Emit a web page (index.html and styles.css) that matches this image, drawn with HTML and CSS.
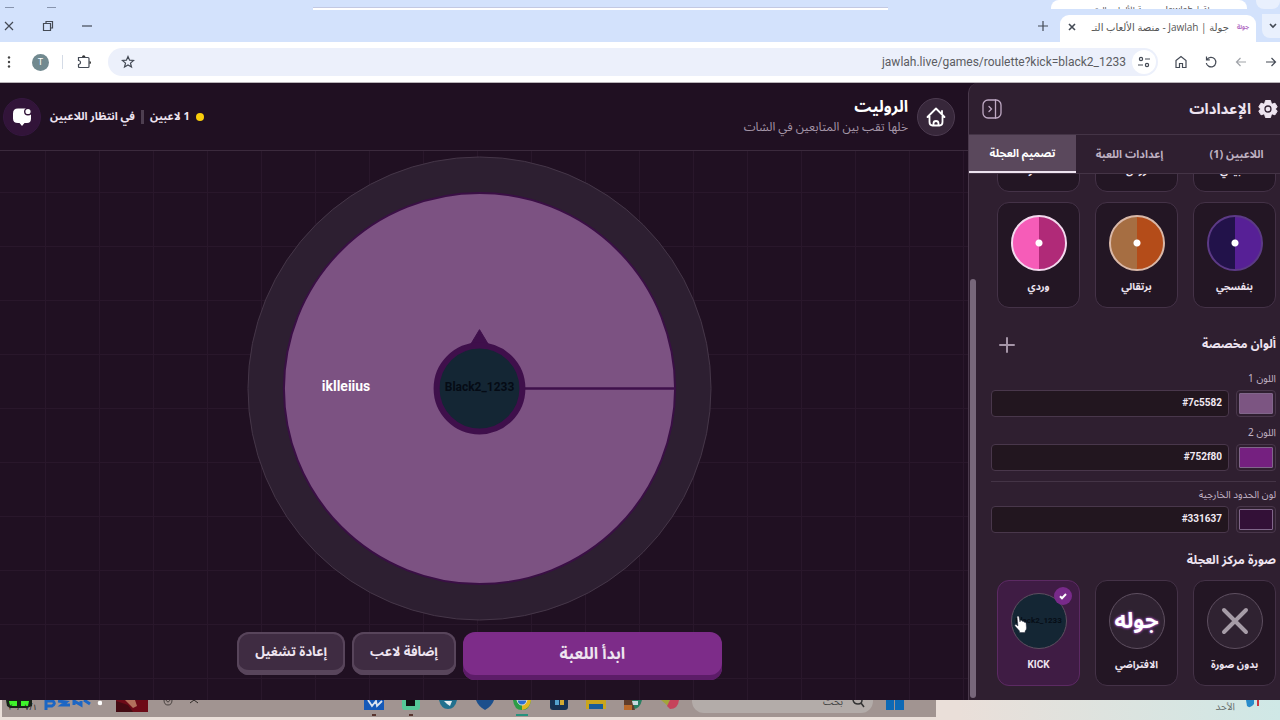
FILE: index.html
```html
<!DOCTYPE html>
<html lang="ar" dir="rtl">

<head>
    <meta charset="utf-8"/>
    <title>جولة | Jawlah - منصة الألعاب</title>
    <link rel="stylesheet" href="styles.css">
</head>

<body>
<div class="back-window">
    <span class="back-edge"></span>
    <span class="back-tab">جولة | Jawlah - منصة الألعاب الت</span>
    <span class="back-bar"></span>
    <span class="back-controls"><i></i><i></i></span>
</div>

<div class="tabstrip">
    <button class="tab-list" aria-label="بحث في علامات التبويب">
        <svg width="10" height="10" viewBox="0 0 10 10"><path d="M2 3l3 3 3-3" class="line bold"/></svg>
    </button>
    <div class="tab">
        <span class="favicon">جولة</span>
        <span class="tab-title">جولة | Jawlah - منصة الألعاب التـ</span>
        <button aria-label="إغلاق علامة التبويب">
            <svg width="10" height="10" viewBox="0 0 10 10"><path d="M2 2l6 6M8 2l-6 6" class="line bold"/></svg>
        </button>
    </div>
    <button class="new-tab" aria-label="علامة تبويب جديدة">
        <svg width="12" height="12" viewBox="0 0 12 12"><path d="M6 1v10M1 6h10" class="line"/></svg>
    </button>
    <div class="window-controls">
        <button aria-label="تصغير"><svg width="12" height="12" viewBox="0 0 12 12"><path d="M1 6h10" class="line"/></svg></button>
        <button aria-label="استعادة"><svg width="12" height="12" viewBox="0 0 12 12"><path d="M1.500 3.500h7v7h-7zM4 3V1.500h6.500V8H9" class="line"/></svg></button>
        <button aria-label="إغلاق"><svg width="12" height="12" viewBox="0 0 12 12"><path d="M2 2l8 8M10 2l-8 8" class="line"/></svg></button>
    </div>
</div>

<div class="browser-bar">
    <button aria-label="للأمام"><svg width="14" height="14" viewBox="0 0 14 14"><path d="M2 7h9M7.500 3L11.500 7l-4 4" class="line"/></svg></button>
    <button class="faded" aria-label="رجوع"><svg width="14" height="14" viewBox="0 0 14 14"><path d="M12 7H3M6.500 3L2.500 7l4 4" class="line"/></svg></button>
    <button aria-label="تحديث"><svg width="14" height="14" viewBox="0 0 14 14"><path d="M3 4.500A4.800 4.800 0 1 1 2.300 8M2.500 1.500v3.300h3.300" class="line"/></svg></button>
    <button aria-label="الصفحة الرئيسية"><svg width="14" height="14" viewBox="0 0 14 14"><path d="M2 5.500L7 1.500l5 4v7H8.500v-4h-3v4H2z" class="line"/></svg></button>
    <div class="omnibox">
        <span class="site-info"><svg width="14" height="14" viewBox="0 0 14 14"><circle cx="4" cy="4" r="1.600" class="line"/><circle cx="10" cy="10" r="1.600" class="line"/><path d="M8 4h5M1 10h5" class="line"/></svg></span>
        <input type="text" class="url" aria-label="العنوان" value="jawlah.live/games/roulette?kick=black2_1233">
        <button aria-label="إضافة إشارة"><svg width="14" height="14" viewBox="0 0 14 14"><path d="M7 1.500l1.600 3.700 4 .3-3.100 2.600 1 3.900L7 9.900 3.500 12l1-3.900L1.400 5.500l4-.3z" class="line"/></svg></button>
    </div>
    <button class="extensions" aria-label="الإضافات"><svg width="16" height="16" viewBox="0 0 16 16"><path d="M2.500 3.500h9.500q1 0 1 1v8q0 1-1 1H3.500q-1 0-1-1V10.500a2 2 0 0 0 0-4z" class="line"/><path d="M6 3a1.700 1.700 0 0 1 3.400 0zM13.500 7a1.500 1.500 0 0 1 0 3z" fill="#333"/></svg></button>
    <span class="bar-sep"></span>
    <span class="profile">T</span>
    <button aria-label="القائمة"><svg width="14" height="14" viewBox="0 0 14 14"><g fill="#444"><circle cx="7" cy="2.500" r="1.200"/><circle cx="7" cy="7" r="1.200"/><circle cx="7" cy="11.500" r="1.200"/></g></svg></button>
</div>

<div class="app">
    <aside class="sidebar">
        <header class="side-head">
            <svg width="20" height="20" viewBox="0 0 20 20"><path fill="#eee4f0" stroke="#eee4f0" stroke-linejoin="round" d="M7.500 1.500h5l.7 2.700 1.300.8 2.500-.8 2.200 3.700-1.900 2.100 1.900 2.100-2.200 3.700-2.500-.8-1.300.8-.7 2.700h-5l-.7-2.700-1.300-.8-2.500.8L.8 12.100l1.900-2.100L.8 7.900 3 4.200l2.500.8 1.300-.8z"/><circle cx="10" cy="10" r="3" fill="#eee4f0" stroke="#2f1f30" stroke-width="1.300"/></svg>
            <h2>الإعدادات</h2>
            <button class="collapse" aria-label="طي اللوحة">
                <svg width="20" height="20" viewBox="0 0 20 20" fill="none" stroke="#bfa9c4" stroke-width="1.300" stroke-linecap="round"><rect x="1" y="1" width="18" height="18" rx="5"/><path d="M13.500 1v18M7 7.500L9.500 10 7 12.500"/></svg>
            </button>
        </header>
        <nav class="side-tabs">
            <button>اللاعبين (1)</button>
            <button>إعدادات اللعبة</button>
            <button class="active">تصميم العجلة</button>
        </nav>
        <div class="side-body">
            <div class="side-content">
                <div class="cards">
                    <button class="card"><span class="disc green"></span>طبيعي</button>
                    <button class="card"><span class="disc blue"></span>زرقن</button>
                    <button class="card"><span class="disc red"></span>أحمر</button>
                    <button class="card"><span class="disc violet"></span>بنفسجي</button>
                    <button class="card"><span class="disc orange"></span>برتقالي</button>
                    <button class="card"><span class="disc pink"></span>وردي</button>
                </div>
                <div class="custom-head">
                    <h3>ألوان مخصصة</h3>
                    <button aria-label="إضافة لون">
                        <svg width="18" height="18" viewBox="0 0 18 18"><path d="M9 2v14M2 9h14" stroke="#a595a7" stroke-width="2" stroke-linecap="round"/></svg>
                    </button>
                </div>
                <div class="color-field">
                    <label for="color1">اللون 1</label>
                    <div class="color-row">
                        <input type="color" id="color1" value="#7c5582">
                        <input type="text" aria-label="قيمة اللون 1" value="#7c5582">
                    </div>
                </div>
                <div class="color-field">
                    <label for="color2">اللون 2</label>
                    <div class="color-row">
                        <input type="color" id="color2" value="#752080">
                        <input type="text" aria-label="قيمة اللون 2" value="#752f80">
                    </div>
                </div>
                <div class="color-field border-field">
                    <label for="color3">لون الحدود الخارجية</label>
                    <div class="color-row">
                        <input type="color" id="color3" value="#331037">
                        <input type="text" aria-label="قيمة لون الحدود" value="#331637">
                    </div>
                </div>
                <h3 class="center-title">صورة مركز العجلة</h3>
                <div class="cards">
                    <button class="card">
                        <span class="thumb"><svg width="30" height="30" viewBox="0 0 30 30"><path d="M4 4l22 22M26 4L4 26" stroke="#a69ca7" stroke-width="4" stroke-linecap="round"/></svg></span>
                        بدون صورة
                    </button>
                    <button class="card">
                        <span class="thumb logo">جوله</span>
                        الافتراضي
                    </button>
                    <button class="card selected">
                        <span class="thumb kick">Black2_1233</span>
                        KICK
                        <span class="check"><svg width="10" height="10" viewBox="0 0 10 10"><path d="M2 5.200l2 2 4-4.200" fill="none" stroke="#fff" stroke-width="2"/></svg></span>
                        <svg class="hand" width="14" height="18" viewBox="0 0 14 18"><path fill="#fff" stroke="#223" stroke-width=".4" d="M3 1.500q1.500-1 2 .5l1 5 .3-1.500q1.500-.6 1.800.8 1.700-.6 2 .9 1.900-.3 2 1.300l.4 4.500q0 1.800-1.400 3V17.500H5.500V16L1 11q-.8-1.700 1-1.600L4 11z"/></svg>
                    </button>
                </div>
            </div>
            <div class="scrollbar"><span></span></div>
        </div>
    </aside>

    <main class="main">
        <header class="game-head">
            <a href="#" class="round" aria-label="الرئيسية">
                <svg width="20" height="20" viewBox="0 0 20 20" fill="none" stroke="#fff" stroke-width="1.800" stroke-linecap="round" stroke-linejoin="round"><path d="M1.500 10L10 1.500 18.500 10M16 4v3M3.500 9v6q0 3.500 3 3.500h7q3 0 3-3.500V9M7.500 18v-1.500a2.500 2.500 0 0 1 5 0V18"/></svg>
            </a>
            <div class="game-name">
                <h1>الروليت</h1>
                <p>خلها تقب بين المتابعين في الشات</p>
            </div>
            <div class="status">
                <span class="dot"></span>
                <span>1 لاعبين</span>
                <span class="pipe"></span>
                <span>في انتظار اللاعبين</span>
            </div>
            <button class="round chat" aria-label="المحادثة">
                <svg width="20" height="20" viewBox="0 0 20 20"><path fill="#fff" d="M6 1.500h9q4 0 4 4v6q0 4.500-4 4.500h-2.500L10 19l-2.500-3H6q-5 0-5-4.500v-5q0-5 5-5z"/><circle cx="16" cy="4.500" r="3.300" fill="#fff" stroke="#321439" stroke-width="1.400"/></svg>
            </button>
        </header>
        <section class="stage">
            <svg class="wheel" viewBox="0 0 466 466">
                <circle cx="233" cy="233" r="232" fill="#2d1f31" stroke="#453648"/>
                <circle cx="233" cy="233" r="196" fill="#7c5282" stroke="#3a0f45" stroke-width="2"/>
                <path d="M278 233h151" stroke="#3f104b" stroke-width="2.500"/>
                <path d="M233 174l12 20h-24z" fill="#3f0f4b" stroke="#3f0f4b"/>
                <circle cx="233" cy="233" r="43" fill="#142634" stroke="#3f0f4b" stroke-width="6"/>
                <text x="75" y="236" class="player">iklleiius</text>
                <text x="233" y="236" class="center-name">Black2_1233</text>
            </svg>
            <div class="actions">
                <button class="start">ابدأ اللعبة</button>
                <button class="plain">إضافة لاعب</button>
                <button class="plain">إعادة تشغيل</button>
            </div>
        </section>
    </main>
</div>

<footer class="taskbar">
    <div class="tray">
        <svg width="102" height="16" viewBox="0 0 102 16">
            <path d="M6 0h26v6l-5 2H10L7 6z" fill="#172117"/><path d="M9 1h8v5h-7zM21 1h8l-1 5h-7z" fill="#3ef52a"/>
            <text x="37" y="10" class="date">٢٠/٠٧/١</text>
            <path d="M46 10V1h7q3 3-1 5h-5M58 1l8 1-4 3h8M74 5V1l7 4V1M84 0l6 4" fill="none" stroke="#1c66c4" stroke-width="3"/>
            <circle cx="100" cy="3" r="2.300" fill="#fff"/>
        </svg>
        <svg width="32" height="16" viewBox="0 0 32 16"><path d="M0 0h32v12H0z" fill="#6d0a17"/><path d="M9 0h10l2 6-4 2z" fill="#b3705b"/><path d="M0 1l12 4 5 7H0z" fill="#430a12"/></svg>
        <svg width="12" height="8" viewBox="0 0 12 8"><path d="M2 0q0 5 4 5t4-5M4 0q2 4 4 0" fill="none" stroke="#494240"/></svg>
        <svg width="12" height="8" viewBox="0 0 12 8"><path d="M2 3l4-3 4 3" fill="none" stroke="#2e2927"/></svg>
    </div>
    <div class="pinned">
        <svg width="20" height="16" viewBox="0 0 20 16"><path d="M0 0h20v10H0z" fill="#1459b8"/><path d="M4 0l4 6 4-5 1 5 5-5" fill="none" stroke="#d9e2ee" stroke-width="1.800"/><path d="M8 14h4v2H8z" fill="#59352e"/></svg>
        <svg width="20" height="16" viewBox="0 0 20 16"><path d="M1 0h18v7q0 3-3 3H4q-3 0-3-3z" fill="#55c896"/><path d="M5 0h9v6H5z" fill="#111"/><path d="M8 14h4v2H8z" fill="#59352e"/></svg>
        <svg width="20" height="16" viewBox="0 0 20 16"><path d="M1 0h18q-2 9-9 9T1 0z" fill="#21708e"/><path d="M6 1h8l-2 5-3-2z" fill="#e6edf0"/></svg>
        <svg width="20" height="16" viewBox="0 0 20 16"><path d="M1 0h18q-2 6-9 10Q3 6 1 0z" fill="#1c4f8c"/></svg>
        <svg width="20" height="16" viewBox="0 0 20 16"><path d="M1 0h18q-1 10-9 10T1 0z" fill="#2c9c46"/><path d="M10 0h9q-1 9-9 10z" fill="#e2b71e"/><path d="M5 0h10q-1 5-5 5T5 0z" fill="#2c6ed1" stroke="#ddd"/><path d="M4 14h12v2H4z" fill="#27917d"/></svg>
        <svg width="20" height="16" viewBox="0 0 20 16"><path d="M1 0h18v7q0 3-3 3H4q-3 0-3-3z" fill="#173253"/><path d="M6 0h4v5H6z" fill="#54a3cf"/><path d="M11 0h4v5h-4z" fill="#d2aa31"/></svg>
        <svg width="20" height="16" viewBox="0 0 20 16"><path d="M0 0h20v9H0z" fill="#c9a51e"/><path d="M3 4h14v5H3z" fill="#185c9a"/></svg>
        <svg width="20" height="16" viewBox="0 0 20 16"><path d="M1 0h18q-2 9-9 9z" fill="#287f62"/><path d="M1 0h8l3 10H1z" fill="#603d2b"/><path d="M9 1h6v4h-5z" fill="#c7dadf"/><path d="M1 5h8v5H1z" fill="#ba692a"/></svg>
        <svg width="20" height="16" viewBox="0 0 20 16"><path d="M1 0h9l-2 6z" fill="#a2a43b"/><path d="M10 0h9q-1 9-9 9l-3-3z" fill="#c5435b"/></svg>
    </div>
    <div class="search">
        <span>بحث</span>
        <svg width="14" height="8" viewBox="0 0 14 8"><path d="M2 0q1 4 5 4t4-4M10 3l3 4" fill="none" stroke="#333" stroke-width="1.500"/></svg>
    </div>
    <svg class="win" width="20" height="10" viewBox="0 0 20 10"><path d="M1 0h8v10H1zM10 0h9v10h-9z" fill="#0d69b5"/></svg>
    <div class="widgets">
        <span>الأحد</span>
        <svg width="20" height="10" viewBox="0 0 20 10"><path d="M3 0h8v4q-4 5-7 2z" fill="#288bcb"/><path d="M14 0h2v6h-2z" fill="#cd3742"/></svg>
    </div>
</footer>
</body>
</html>
```
FILE: styles.css
```css
* {
    box-sizing: border-box;
    margin: 0;
    padding: 0;
}

body {
    display: flex;
    flex-direction: column;
    height: 100vh;
    overflow: hidden;
    background: #201022;
    color: #eee4f0;
    font-family: "Noto Sans Arabic", "DejaVu Sans", sans-serif;
    font-size: 10px;
}

button {
    background: none;
    border: none;
    color: inherit;
    font: inherit;
    cursor: pointer;
}

svg {
    display: block;
    flex: none;
}

.line {
    fill: none;
    stroke: #444a55;
    stroke-width: 1.2;
}

.bold {
    stroke-width: 1.6;
}

/* window behind */
.back-window {
    display: flex;
    height: 10px;
    flex: none;
    overflow: hidden;
    background: #d3e2fc;
}

.back-edge {
    width: 24px;
    height: 9px;
    margin-left: 9px;
    border-radius: 0 0 8px 8px;
    background: #e9f0fd;
}

.back-tab {
    width: 196px;
    height: 9px;
    padding-right: 28px;
    overflow: hidden;
    border-radius: 8px 8px 0 0;
    background: #fff;
    color: #555;
    font-size: 9px;
    line-height: 22px;
    white-space: nowrap;
}

.back-bar {
    width: 45%;
    height: 3px;
    margin: 7px 163px 0 auto;
    border-top: 1px solid #c3c9e2;
    background: #fff;
}

.back-controls {
    display: flex;
    justify-content: space-between;
    width: 313px;
    padding: 7px 227px 0 5px;
    direction: ltr;
}

.back-controls i {
    width: 9px;
    height: 1px;
    margin-right: 30px;
    background: #8794ad;
}

/* browser */
.tabstrip {
    display: flex;
    flex: none;
    align-items: center;
    height: 32px;
    background: #d3e2fc;
}

.tab-list {
    width: 18px;
    height: 24px;
    padding-right: 2px;
    margin-left: 6px;
    border-radius: 0 0 0 8px;
    background: #e9f0fd;
}

.tab {
    display: flex;
    align-items: center;
    gap: 8px;
    width: 196px;
    height: 27px;
    margin-top: 5px;
    padding: 0 7px 4px;
    border-radius: 9px 9px 0 0;
    background: #fff;
}

.favicon {
    color: #b36fc4;
    font-size: 6px;
    font-weight: bold;
}

.tab-title {
    flex: 1;
    overflow: hidden;
    color: #555;
    font-family: "Open Sans", "DejaVu Sans", sans-serif;
    font-size: 10px;
    white-space: nowrap;
}

.new-tab {
    margin-right: 11px;
}

.window-controls {
    display: flex;
    gap: 27px;
    margin-right: auto;
    padding-left: 3px;
}

.browser-bar {
    display: flex;
    flex: none;
    align-items: center;
    gap: 16px;
    height: 41px;
    padding: 0 2px;
    border-bottom: 1px solid #b9b4b9;
    background: #fff;
}

.faded {
    opacity: .5;
}

.omnibox {
    display: flex;
    flex: 1;
    align-items: center;
    height: 28px;
    padding: 0 2px 0 13px;
    border-radius: 14px;
    background: #ecf0fb;
}

.site-info {
    padding: 5px;
    border-radius: 12px;
    background: #fff;
}

.url {
    flex: 1;
    padding: 0 6px;
    border: none;
    outline: none;
    background: none;
    color: #5b5c62;
    direction: ltr;
    font-family: Roboto, "Noto Sans", sans-serif;
    font-size: 12px;
    text-align: right;
}

.bar-sep {
    width: 1px;
    height: 14px;
    margin: 0 -3px;
    background: #d4dbe6;
}

.profile {
    width: 17px;
    border-radius: 50%;
    background: #71898f;
    color: #fff;
    font-family: Roboto, sans-serif;
    font-size: 9px;
    line-height: 17px;
    text-align: center;
}

/* app */
.app {
    display: flex;
    flex: 1;
    min-height: 0;
}

.sidebar {
    display: flex;
    flex-direction: column;
    flex: none;
    width: 312px;
    border-left: 1px solid #4a394c;
    border-top-left-radius: 10px;
    background: #2f1f30;
}

.side-head {
    display: flex;
    flex: none;
    align-items: center;
    gap: 7px;
    height: 51px;
    padding: 0 2px 0 10px;
}

.side-head h2 {
    font-size: 15px;
}

.collapse {
    margin-right: auto;
    padding: 0 3px;
}

.side-tabs {
    display: flex;
    flex: none;
    height: 40px;
    margin-right: -10px;
    border-top: 1px solid #443446;
    border-bottom: 1px solid #443446;
}

.side-tabs button {
    flex: 1;
    color: #bfb1c2;
    font-size: 11px;
    font-weight: bold;
    white-space: nowrap;
}

.side-tabs .active {
    border-bottom: 2px solid #eee4f0;
    background: #5a485c;
    color: #fff;
}

.side-body {
    display: flex;
    flex: 1;
    min-height: 0;
}

.side-content {
    display: flex;
    flex: 1;
    flex-direction: column;
    justify-content: flex-end;
    overflow: hidden;
    padding: 0 4px 14px 15px;
}

.side-content > * {
    flex: none;
}

.scrollbar {
    display: flex;
    align-items: flex-end;
    width: 7px;
    padding: 0 0 2px 1px;
}

.scrollbar span {
    width: 6px;
    height: 80%;
    border-radius: 3px;
    background: #77677a;
}

.cards {
    display: grid;
    grid-template-columns: repeat(3, 1fr);
    gap: 10px 15px;
    padding-left: 6px;
}

.card {
    position: relative;
    display: flex;
    flex-direction: column;
    align-items: center;
    gap: 8px;
    height: 106px;
    padding-top: 12px;
    border: 1px solid #443247;
    border-radius: 12px;
    background: #231624;
    font-weight: bold;
    line-height: 16px;
    white-space: nowrap;
}

.disc {
    width: 56px;
    height: 56px;
    border: 2px solid #f3d9ee;
    border-radius: 50%;
}

.green {
    background: linear-gradient(90deg, #195c36 50%, #2a8f55 50%);
}

.blue {
    background: linear-gradient(90deg, #1c3f85 50%, #2c65c9 50%);
}

.red {
    background: linear-gradient(90deg, #7c1824 50%, #b92b38 50%);
}

.violet {
    border-color: #5c3a86;
    background: radial-gradient(circle, #fff 3px, transparent 4px), linear-gradient(90deg, #22124a 50%, #572096 50%);
}

.orange {
    border-color: #d9b8a8;
    background: radial-gradient(circle, #fff 3px, transparent 4px), linear-gradient(90deg, #a66e42 50%, #b44c19 50%);
}

.pink {
    background: radial-gradient(circle, #fff 3px, transparent 4px), linear-gradient(90deg, #f65cb8 50%, #b02a78 50%);
}

.custom-head {
    display: flex;
    align-items: center;
    justify-content: space-between;
    height: 24px;
    margin: 25px 0 14px;
    padding-left: 7px;
}

h3 {
    font-size: 12px;
    line-height: 20px;
}

.color-field {
    margin-bottom: 8px;
}

.color-field label {
    display: block;
    margin-bottom: 3px;
    color: #c3b4c6;
    line-height: 16px;
}

.color-row {
    display: flex;
    gap: 7px;
}

.color-row input {
    height: 27px;
    border: 1px solid #49374b;
    border-radius: 4px;
    background: #22161f;
}

.color-row input[type=color] {
    width: 40px;
    padding: 2px;
    background: #2f1f30;
}

.color-row input[type=color]::-webkit-color-swatch-wrapper {
    padding: 0;
}

.color-row input[type=color]::-webkit-color-swatch {
    border: 1px solid #80668a;
    border-radius: 1px;
}

.color-row input[type=text] {
    flex: 1;
    min-width: 0;
    padding: 0 6px 2px;
    color: #f1e9f2;
    direction: ltr;
    font-family: Roboto, sans-serif;
    font-size: 10px;
    font-weight: bold;
    text-align: right;
}

.border-field {
    margin: 2px 0 18px;
    padding-top: 5px;
    border-top: 1px solid #443446;
}

.center-title {
    margin-bottom: 9px;
}

.thumb {
    display: flex;
    align-items: center;
    justify-content: center;
    width: 56px;
    height: 56px;
    border: 1px solid #5e4f60;
    border-radius: 50%;
    background: #2f2231;
}

.logo {
    color: #fff;
    font-size: 22px;
    text-shadow: 0 0 3px #b45ad0, 0 0 2px #b45ad0;
}

.kick {
    background: #142634;
    color: #060d16;
    font-family: Roboto, sans-serif;
    font-size: 8px;
}

.selected {
    border-color: #5c2a63;
    background: #3f1c44;
    font-family: Roboto, sans-serif;
}

.check {
    position: absolute;
    top: 6px;
    right: 7px;
    padding: 4px;
    border-radius: 50%;
    background: #782a8a;
}

.hand {
    position: absolute;
    top: 34px;
    left: 16px;
}

.main {
    display: flex;
    flex: 1;
    flex-direction: column;
    min-width: 0;
}

.game-head {
    display: flex;
    flex: none;
    align-items: center;
    gap: 9px;
    height: 68px;
    padding: 0 13px 0 3px;
    border-bottom: 1px solid #3b2a3d;
}

.round {
    display: flex;
    align-items: center;
    justify-content: center;
    width: 38px;
    height: 38px;
    border: 1px solid #4c3b50;
    border-radius: 50%;
    background: #37273a;
}

.chat {
    border-color: #351740;
    background: #321439;
}

h1 {
    color: #fff;
    font-size: 16px;
    line-height: 22px;
}

.game-name p {
    color: #a596a8;
    font-size: 12px;
    line-height: 20px;
}

.status {
    display: flex;
    align-items: center;
    gap: 6px;
    margin-right: auto;
    font-size: 11px;
    font-weight: bold;
}

.dot {
    width: 8px;
    height: 8px;
    border-radius: 50%;
    background: #f8cd0b;
}

.pipe {
    width: 3px;
    height: 14px;
    background: #4d3e50;
}

.stage {
    display: flex;
    flex: 1;
    flex-direction: column;
    align-items: center;
    min-height: 0;
    padding: 5px 9px 20px 0;
    background-image: linear-gradient(#29172b 1px, transparent 1px), linear-gradient(90deg, #29172b 1px, transparent 1px);
    background-position: 45px 41px;
    background-size: 54px 54px;
}

.wheel {
    flex: 1;
    min-height: 0;
    direction: ltr;
}

.player {
    fill: #fff;
    font: bold 14px Roboto, sans-serif;
}

.center-name {
    fill: #050b15;
    font: bold 12px Roboto, sans-serif;
    text-anchor: middle;
}

.actions {
    display: flex;
    flex: none;
    gap: 7px;
    margin-top: 11px;
}

.actions button {
    border-radius: 12px;
    font-weight: bold;
}

.start {
    width: 259px;
    height: 48px;
    padding-bottom: 4px;
    background: #7d2c89;
    box-shadow: inset 0 -5px #5c1c68;
    font-size: 16px;
}

.plain {
    height: 43px;
    padding: 0 18px 4px;
    background: #3f2c42;
    box-shadow: inset 0 0 0 2px #58455b, inset 0 -5px #58455b;
    font-size: 13px;
    white-space: nowrap;
}

/* taskbar */
.taskbar {
    display: flex;
    flex: none;
    align-items: flex-start;
    height: 20px;
    overflow: hidden;
    direction: ltr;
    background: linear-gradient(#a19491, #a19491) 2px 0 / 73% 17px no-repeat, linear-gradient(90deg, #eadfd9 75%, #cfe8e6);
}

.tray {
    display: flex;
    gap: 14px;
    flex: 1;
}

.date {
    direction: rtl;
    fill: #222;
    font-size: 8px;
}

.pinned {
    display: flex;
    gap: 17px;
}

.search {
    display: flex;
    justify-content: flex-end;
    gap: 8px;
    width: 181px;
    height: 13px;
    margin: 0 12px;
    padding-right: 8px;
    overflow: hidden;
    border-radius: 0 0 12px 12px;
    background: #b3aca9;
    color: #444;
    line-height: 4px;
}

.widgets {
    display: flex;
    gap: 8px;
    justify-content: flex-end;
    width: 375px;
    padding-right: 17px;
    color: #68706f;
    line-height: 13px;
}
```
